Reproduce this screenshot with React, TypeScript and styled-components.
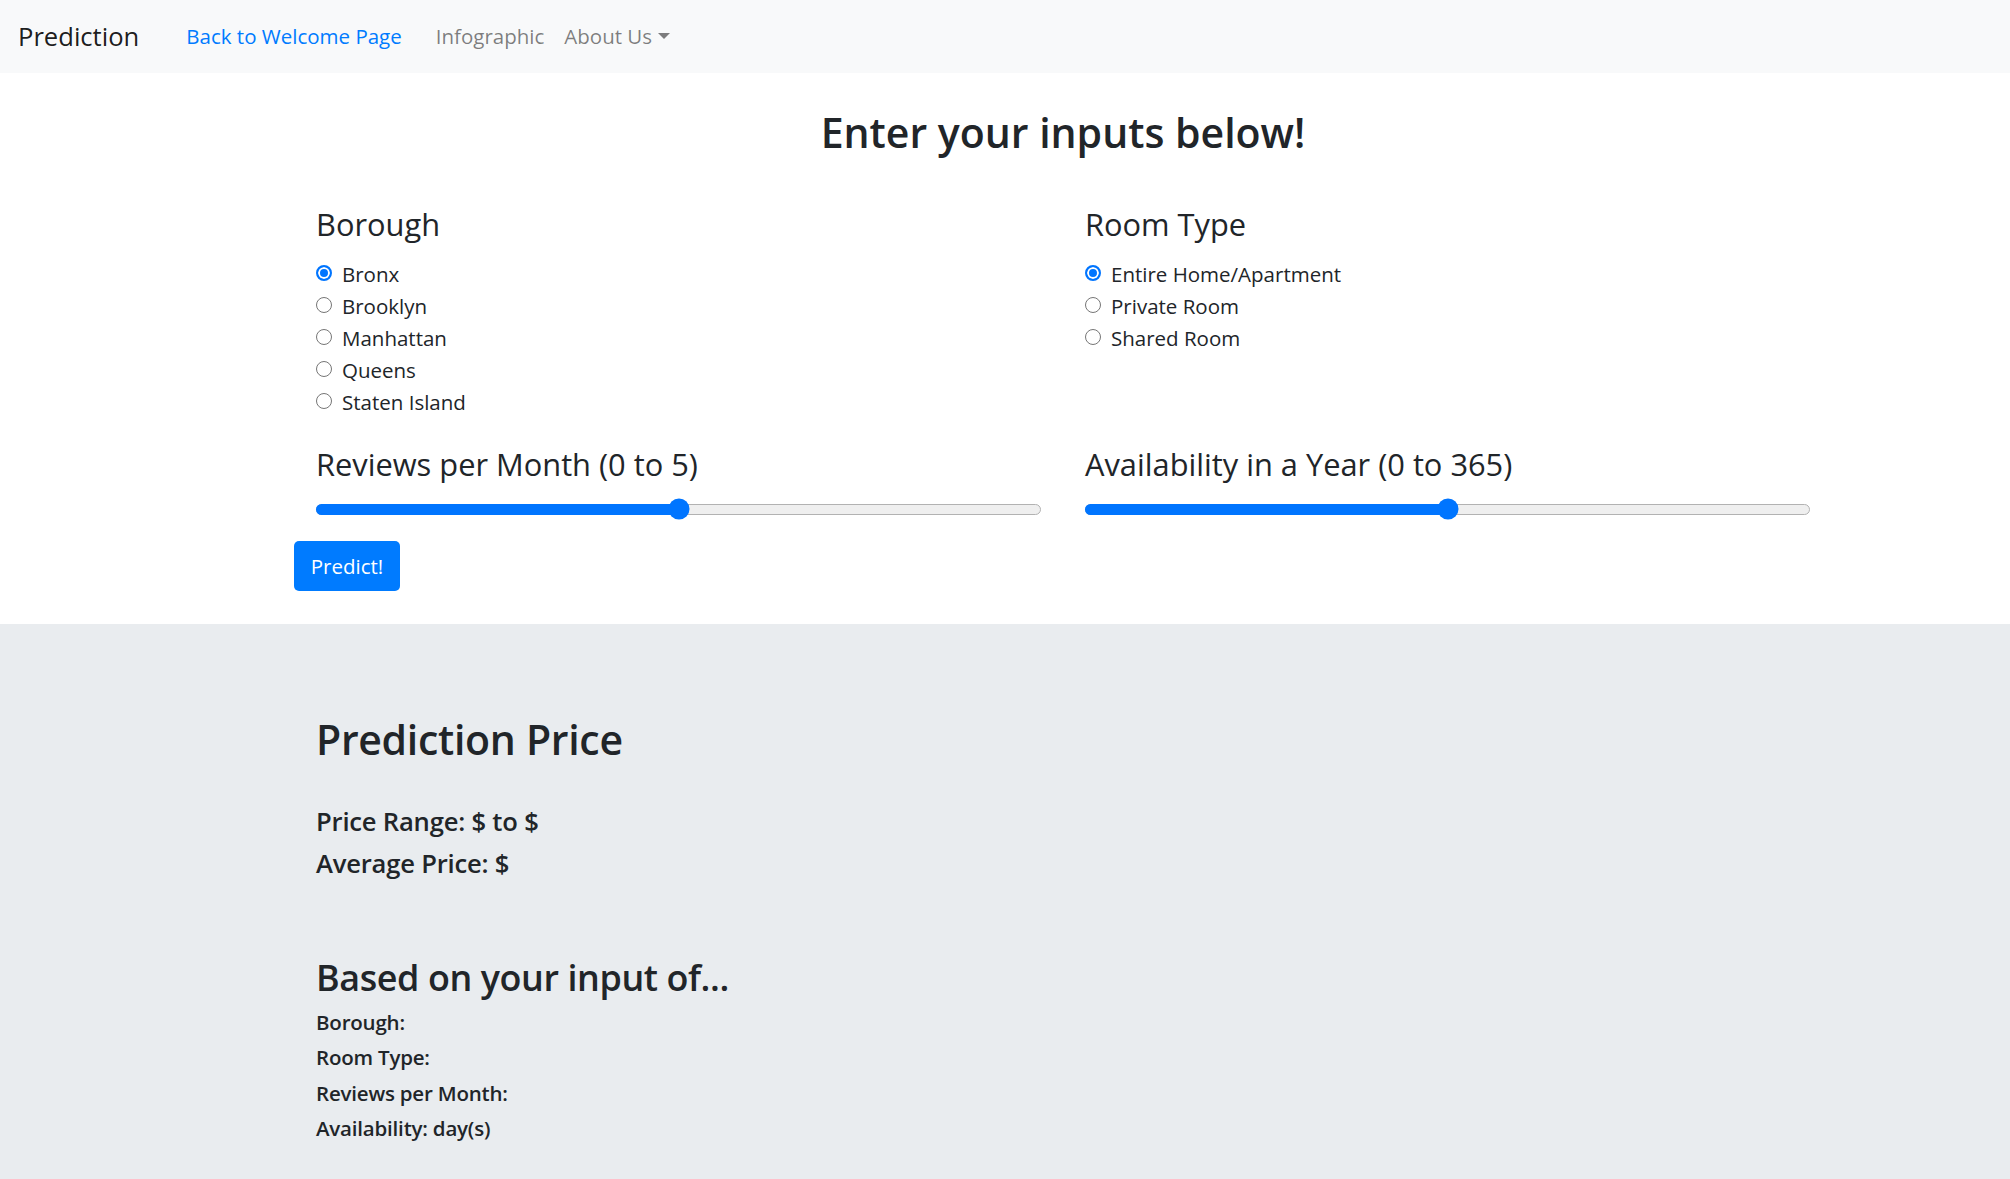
import React from "react";
import styled, { createGlobalStyle } from "styled-components";

const Global = createGlobalStyle`
  html, body { margin: 0; padding: 0; }
  body {
    font-family: "Open Sans", "Noto Sans", "Liberation Sans", sans-serif;
    color: #212529;
    background: #ffffff;
  }
  * { box-sizing: border-box; }
`;

const Page = styled.div`
  display: flex;
  flex-direction: column;
  min-height: 100vh;
`;

const Navbar = styled.nav`
  height: 73px;
  background: #f8f9fa;
  display: flex;
  align-items: center;
  padding: 0 18px;
`;

const Brand = styled.a`
  font-size: 25.6px;
  line-height: 1;
  color: rgba(0, 0, 0, 0.9);
  margin-right: 47px;
  text-decoration: none;
`;

const NavLink = styled.a<{ $active?: boolean; $gap?: number }>`
  font-size: 20.5px;
  line-height: 1.5;
  color: ${(p) => (p.$active ? "#007bff" : "rgba(0, 0, 0, 0.5)")};
  margin-right: ${(p) => p.$gap ?? 20}px;
  text-decoration: none;
  display: inline-flex;
  align-items: center;
`;

const Caret = styled.span`
  display: inline-block;
  margin-left: 6px;
  width: 0;
  height: 0;
  border-left: 6px solid transparent;
  border-right: 6px solid transparent;
  border-top: 6px solid rgba(0, 0, 0, 0.5);
  transform: translateY(-1px);
`;

const FormSection = styled.section`
  padding: 35px 0 33px 294px;
`;

const Container = styled.div`
  width: 1538px;
`;

const Title = styled.h2`
  margin: 0 0 48px;
  font-size: 41px;
  line-height: 49px;
  font-weight: 600;
  text-align: center;
`;

const Grid = styled.div`
  display: grid;
  grid-template-columns: 1fr 1fr;
`;

const Col = styled.div`
  padding: 0 22px;
  display: flex;
  flex-direction: column;
`;

const GroupLabel = styled.div<{ $mb: number }>`
  font-size: 30.8px;
  line-height: 37px;
  font-weight: 400;
  margin-top: 1px;
  margin-bottom: ${(p) => p.$mb}px;
`;

const RadioList = styled.div`
  display: flex;
  flex-direction: column;
  min-height: 160px;
`;

const RadioRow = styled.label`
  display: flex;
  align-items: center;
  height: 32px;
  font-size: 20.5px;
  cursor: pointer;
`;

const RadioDot = styled.span<{ $checked?: boolean }>`
  width: 16px;
  height: 16px;
  border-radius: 50%;
  flex: none;
  margin-right: 10px;
  margin-top: -2px;
  border: ${(p) => (p.$checked ? "2px solid #0075ff" : "1px solid #767676")};
  background: ${(p) => (p.$checked ? "#0075ff" : "#ffffff")};
  box-shadow: ${(p) => (p.$checked ? "inset 0 0 0 2px #ffffff" : "none")};
`;

const SliderGroup = styled.div`
  margin-top: 27px;
`;

const SliderWrap = styled.div`
  position: relative;
  height: 22px;
  display: flex;
  align-items: center;
`;

const Track = styled.div`
  position: relative;
  width: 100%;
  height: 11px;
  border-radius: 6px;
  background: #efefef;
  border: 1px solid #b2b2b2;
`;

const Fill = styled.div`
  position: absolute;
  left: -1px;
  top: -1px;
  bottom: -1px;
  background: #0075ff;
  border-radius: 6px 0 0 6px;
`;

const Thumb = styled.div`
  position: absolute;
  top: 50%;
  width: 21px;
  height: 21px;
  border-radius: 50%;
  background: #0075ff;
  transform: translate(-50%, -50%);
`;

const Button = styled.button`
  margin-top: 21px;
  height: 50px;
  width: 106px;
  padding: 0;
  border: none;
  border-radius: 5px;
  background: #007bff;
  color: #ffffff;
  font-family: inherit;
  font-size: 20.5px;
  cursor: pointer;
`;

const ResultSection = styled.section`
  flex: 1;
  background: #e9ecef;
  padding: 91px 0 30px 316px;
`;

const ResultTitle = styled.h2`
  margin: 0 0 42px;
  font-size: 41px;
  line-height: 49px;
  font-weight: 600;
  letter-spacing: -0.3px;
`;

const PriceLine = styled.h5`
  margin: 0 0 11px;
  font-size: 25.6px;
  line-height: 31px;
  font-weight: 600;
  letter-spacing: -0.2px;
`;

const InputTitle = styled.h3`
  margin: 77px 0 11px;
  font-size: 35.9px;
  line-height: 43px;
  font-weight: 600;
  letter-spacing: -0.4px;
`;

const InputLine = styled.h6`
  margin: 0 0 10.7px;
  font-size: 20.5px;
  line-height: 24.6px;
  font-weight: 600;
  letter-spacing: -0.2px;
`;

function Slider({ value }: { value: number }) {
  return (
    <SliderWrap>
      <Track>
        <Fill style={{ width: `${value}%` }} />
      </Track>
      <Thumb style={{ left: `${value}%` }} />
    </SliderWrap>
  );
}

function RadioGroup({ options, checked }: { options: string[]; checked: number }) {
  return (
    <RadioList>
      {options.map((o, i) => (
        <RadioRow key={o}>
          <RadioDot $checked={i === checked} />
          {o}
        </RadioRow>
      ))}
    </RadioList>
  );
}

export default function App() {
  return (
    <Page>
      <Global />
      <Navbar>
        <Brand>Prediction</Brand>
        <NavLink $active $gap={34}>Back to Welcome Page</NavLink>
        <NavLink $gap={20}>Infographic</NavLink>
        <NavLink>
          About Us
          <Caret />
        </NavLink>
      </Navbar>
      <FormSection>
        <Container>
          <Title>Enter your inputs below!</Title>
          <Grid>
            <Col>
              <GroupLabel $mb={15}>Borough</GroupLabel>
              <RadioGroup
                options={["Bronx", "Brooklyn", "Manhattan", "Queens", "Staten Island"]}
                checked={0}
              />
              <SliderGroup>
                <GroupLabel $mb={15}>Reviews per Month (0 to 5)</GroupLabel>
                <Slider value={50} />
              </SliderGroup>
            </Col>
            <Col>
              <GroupLabel $mb={15}>Room Type</GroupLabel>
              <RadioGroup
                options={["Entire Home/Apartment", "Private Room", "Shared Room"]}
                checked={0}
              />
              <SliderGroup>
                <GroupLabel $mb={15}>Availability in a Year (0 to 365)</GroupLabel>
                <Slider value={50} />
              </SliderGroup>
            </Col>
          </Grid>
          <Button>Predict!</Button>
        </Container>
      </FormSection>
      <ResultSection>
        <ResultTitle>Prediction Price</ResultTitle>
        <PriceLine>Price Range: $ to $</PriceLine>
        <PriceLine>Average Price: $</PriceLine>
        <InputTitle>Based on your input of...</InputTitle>
        <InputLine>Borough:</InputLine>
        <InputLine>Room Type:</InputLine>
        <InputLine>Reviews per Month:</InputLine>
        <InputLine>Availability: day(s)</InputLine>
      </ResultSection>
    </Page>
  );
}
